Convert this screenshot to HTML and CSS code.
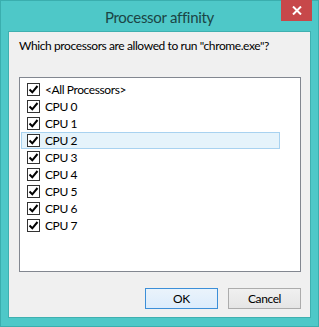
FILE: index.html
```html
<!DOCTYPE html>
<html lang="en">
<head>
    <meta charset="UTF-8">
    <title>Processor affinity</title>
    <link rel="stylesheet" href="styles.css">
</head>
<body>
    <div class="window">
        <div class="titlebar">
            <div class="title">Processor affinity</div>
            <div class="close">
                <svg width="10" height="9" viewBox="0 0 10 9"><path d="M1 0.5 L9 8.5 M9 0.5 L1 8.5" stroke="#fff" stroke-width="2"/></svg>
            </div>
        </div>
        <div class="client">
            <p class="prompt">Which processors are allowed to run "chrome.exe"?</p>
            <div class="listbox">
                <div class="row"><span class="check"></span><span>&lt;All Processors&gt;</span></div>
                <div class="row"><span class="check"></span><span>CPU 0</span></div>
                <div class="row"><span class="check"></span><span>CPU 1</span></div>
                <div class="row focused"><span class="check"></span><span>CPU 2</span></div>
                <div class="row"><span class="check"></span><span>CPU 3</span></div>
                <div class="row"><span class="check"></span><span>CPU 4</span></div>
                <div class="row"><span class="check"></span><span>CPU 5</span></div>
                <div class="row"><span class="check"></span><span>CPU 6</span></div>
                <div class="row"><span class="check"></span><span>CPU 7</span></div>
            </div>
            <div class="buttons">
                <button class="btn default">OK</button>
                <button class="btn">Cancel</button>
            </div>
        </div>
    </div>
</body>
</html>
```

FILE: styles.css
```css
* {
    margin: 0;
    padding: 0;
    box-sizing: border-box;
}

body {
    width: 319px;
    height: 327px;
    font-family: 'Lato', 'Noto Sans', sans-serif;
    font-size: 12px;
    letter-spacing: -0.4px;
    color: #000;
    overflow: hidden;
}

.window {
    width: 319px;
    height: 327px;
    background-color: #4ec8c8;
    border: 1px solid #3aaeae;
    display: flex;
    flex-direction: column;
}

.titlebar {
    height: 30px;
    position: relative;
    display: flex;
    justify-content: center;
    align-items: center;
}

.title {
    font-size: 15px;
    letter-spacing: -0.3px;
    color: #1b4545;
    margin-top: 1px;
}

.close {
    position: absolute;
    top: -1px;
    right: 6px;
    width: 31px;
    height: 21px;
    background-color: #c7484a;
    display: flex;
    align-items: center;
    justify-content: center;
}

.client {
    margin: 0 7px 8px 7px;
    flex-grow: 1;
    background-color: #f0f0f0;
    border: 1px solid #3fb0b0;
    padding: 0 9px 0 10px;
    display: flex;
    flex-direction: column;
}

.prompt {
    margin-top: 6px;
    height: 39px;
    line-height: 16px;
    white-space: nowrap;
}

.listbox {
    height: 195px;
    background-color: #fff;
    border: 1px solid #828790;
    padding: 3px 20px 0 1px;
}

.row {
    height: 17px;
    display: flex;
    align-items: center;
    gap: 5px;
    padding-left: 5px;
    border: 1px solid transparent;
}

.row.focused {
    background-color: #e5f3fb;
    border-color: #a8d2f0;
}

.check {
    width: 13px;
    height: 13px;
    border: 1px solid #333;
    background: #fff url("data:image/svg+xml;utf8,<svg xmlns='http://www.w3.org/2000/svg' width='11' height='11'><path d='M1.5 5.5 L4.3 8.3 L9.5 2' fill='none' stroke='black' stroke-width='2'/></svg>") no-repeat center;
}

.buttons {
    display: flex;
    justify-content: flex-end;
    gap: 10px;
    margin-top: 16px;
}

.btn {
    width: 73px;
    height: 21px;
    font-family: inherit;
    font-size: 12px;
    letter-spacing: inherit;
    background: linear-gradient(#f0f0f0, #e5e5e5);
    border: 1px solid #acacac;
    color: #000;
}

.btn.default {
    border-color: #3c8fd8;
    background: linear-gradient(#eaf3fb, #dcecfc);
}
```
